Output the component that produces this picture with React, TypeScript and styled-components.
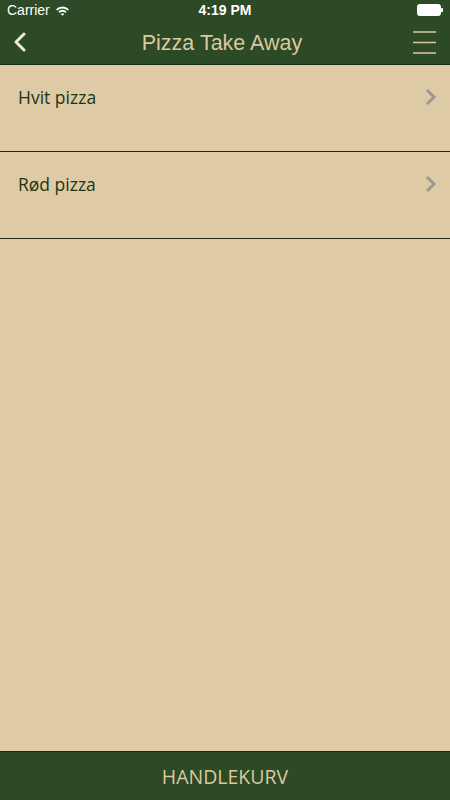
import styled, { createGlobalStyle } from "styled-components";

const items = ["Hvit pizza", "Rød pizza"];

export default function App() {
    return <>
        <GlobalStyle/>
        <Screen>
            <Header>
                <StatusBar>
                    <Carrier>
                        Carrier
                        <svg width="15" height="11" viewBox="0 0 15 11">
                            <path d="M1 4.2 A9 9 0 0 1 14 4.2 L12.6 5.6 A7 7 0 0 0 2.4 5.6 Z" fill="#fff"/>
                            <path d="M3.4 6.6 A5.6 5.6 0 0 1 11.6 6.6 L10.2 8 A3.6 3.6 0 0 0 4.8 8 Z" fill="#fff"/>
                            <path d="M5.8 9 A2.4 2.4 0 0 1 9.2 9 L7.5 10.8 Z" fill="#fff"/>
                        </svg>
                    </Carrier>
                    <Clock>4:19 PM</Clock>
                    <Battery>
                        <svg width="26" height="12" viewBox="0 0 26 12">
                            <rect x="0.5" y="0.5" width="23" height="11" rx="2" fill="#fff" stroke="#fff"/>
                            <rect x="24" y="4" width="2" height="4" rx="0.5" fill="#fff"/>
                        </svg>
                    </Battery>
                </StatusBar>
                <NavBar>
                    <NavButton aria-label="Tilbake">
                        <svg width="14" height="20" viewBox="0 0 14 20">
                            <path d="M11 2 L3 10 L11 18" fill="none" stroke="#f3ead7" strokeWidth="3" strokeLinecap="round" strokeLinejoin="round"/>
                        </svg>
                    </NavButton>
                    <Title>Pizza Take Away</Title>
                    <NavButton aria-label="Meny">
                        <svg width="24" height="23" viewBox="0 0 24 23">
                            <path d="M0 1 H23 M0 11.5 H23 M0 22 H23" stroke="#dcc79f" strokeWidth="1.6"/>
                        </svg>
                    </NavButton>
                </NavBar>
            </Header>
            <List>
                {items.map(name => <Row key={name}>
                    <RowName>{name}</RowName>
                    <svg width="12" height="18" viewBox="0 0 12 18">
                        <path d="M2 2 L9 9 L2 16" fill="none" stroke="#9b9b93" strokeWidth="3"/>
                    </svg>
                </Row>)}
            </List>
            <Footer>HANDLEKURV</Footer>
        </Screen>
    </>
}

const GlobalStyle = createGlobalStyle`
    * {
        box-sizing: border-box;
    }

    body {
        margin: 0;
        background: #decaa4;
    }
`

const Screen = styled.div`
    display: flex;
    flex-direction: column;
    height: 800px;
    background: #decaa4;
`

const Header = styled.header`
    background: #2b4a25;
    border-bottom: 1px solid #16300f;
`

const StatusBar = styled.div`
    display: grid;
    grid-template-columns: 1fr auto 1fr;
    align-items: center;
    height: 20px;
    padding: 0 7px;
    color: #fff;
    font-family: "Liberation Sans", Arial, sans-serif;
    font-size: 14px;
`

const Carrier = styled.div`
    display: flex;
    align-items: center;
    gap: 5px;
`

const Clock = styled.div`
    font-weight: 700;
`

const Battery = styled.div`
    display: flex;
    justify-content: flex-end;
`

const NavBar = styled.div`
    display: flex;
    align-items: center;
    justify-content: space-between;
    height: 44px;
    padding: 0 13px 0 13px;
`

const NavButton = styled.button`
    display: flex;
    align-items: center;
    padding: 0;
    border: none;
    background: none;
`

const Title = styled.h1`
    margin: 3px 0 0 4px;
    color: #dcc79f;
    font-family: "Liberation Sans", Arial, sans-serif;
    font-size: 21.5px;
    font-weight: 400;
`

const List = styled.ul`
    flex: 1;
    margin: 0;
    padding: 0;
    list-style: none;
`

const Row = styled.li`
    display: flex;
    align-items: flex-start;
    justify-content: space-between;
    height: 87px;
    padding: 21px 13px 0 18px;
    border-bottom: 1px solid #1a2a14;

    svg {
        margin-top: 2px;
    }
`

const RowName = styled.span`
    color: #1b3515;
    font-family: "Open Sans", sans-serif;
    font-size: 17.5px;
    line-height: 22px;
`

const Footer = styled.footer`
    display: flex;
    align-items: center;
    justify-content: center;
    height: 49px;
    background: #2b4a25;
    border-top: 1px solid #16300f;
    color: #dcc79f;
    font-family: "Open Sans", sans-serif;
    font-size: 19.5px;
`
